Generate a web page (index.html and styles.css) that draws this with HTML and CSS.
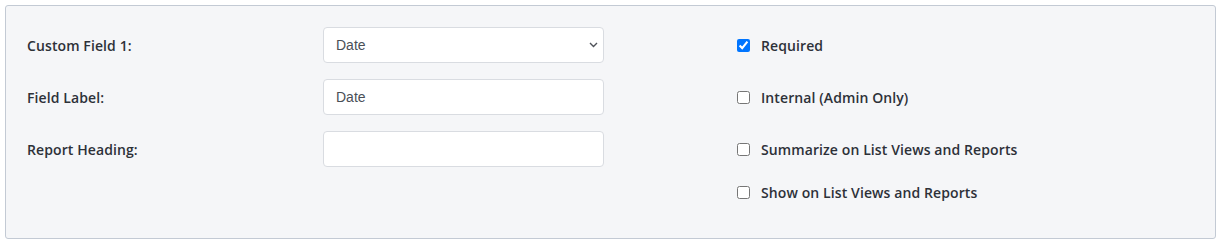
FILE: index.html
```html
<!DOCTYPE html>
<html>
<head>
<meta charset="utf-8">
<link rel="stylesheet" href="styles.css">
</head>
<body>
<div class="panel">
  <div class="grid">
    <label class="lbl">Custom Field 1:</label>
    <div class="selwrap">
      <select class="ctrl sel"><option>Date</option></select>
      <svg class="chev" width="9" height="6" viewBox="0 0 9 6"><path d="M1 1 L4.5 4.5 L8 1" fill="none" stroke="#4f535a" stroke-width="1.4"/></svg>
    </div>
    <label class="chk"><input type="checkbox" checked><span>Required</span></label>

    <label class="lbl">Field Label:</label>
    <input class="ctrl" type="text" value="Date">
    <label class="chk"><input type="checkbox"><span>Internal (Admin Only)</span></label>

    <label class="lbl">Report Heading:</label>
    <input class="ctrl" type="text" value="">
    <label class="chk"><input type="checkbox"><span>Summarize on List Views and Reports</span></label>

    <div></div>
    <div></div>
    <label class="chk"><input type="checkbox"><span>Show on List Views and Reports</span></label>
  </div>
</div>
</body>
</html>
```
FILE: styles.css
```css
html, body {
  margin: 0;
  padding: 0;
  background: #ffffff;
}
body {
  padding: 5px 4px 3px 5px;
  font-family: "Open Sans", "Noto Sans", sans-serif;
}
.panel {
  box-sizing: border-box;
  height: 234px;
  background: #f5f6f8;
  border: 1px solid #c3cad4;
  border-radius: 3px;
  padding: 21px 20px 0 21px;
}
.grid {
  display: grid;
  grid-template-columns: 296px 281px 1fr;
  grid-template-rows: 36px 36px 36px 18px;
  column-gap: 0;
  row-gap: 16px;
}
.lbl {
  display: flex;
  align-items: center;
  font-size: 14px;
  font-weight: 600;
  color: #2d3138;
  letter-spacing: 0.1px;
}
.ctrl {
  box-sizing: border-box;
  width: 281px;
  height: 36px;
  margin: 0;
  border: 1px solid #d9dce1;
  border-radius: 4px;
  background: #ffffff;
  padding: 0 12px;
  font-family: "Liberation Sans", Arial, sans-serif;
  font-size: 14px;
  color: #4a4f57;
  outline: none;
}
.selwrap {
  position: relative;
  width: 281px;
  height: 36px;
}
.sel {
  display: block;
  -webkit-appearance: none;
  appearance: none;
  padding-left: 12px;
}
.chev {
  position: absolute;
  right: 6px;
  top: 15px;
  pointer-events: none;
}
.chk {
  display: flex;
  align-items: center;
  margin-left: 133px;
  font-size: 14px;
  font-weight: 600;
  color: #2d3138;
  letter-spacing: 0.1px;
}
.chk input {
  width: 13px;
  height: 13px;
  margin: 0 11px 0 0;
}
```
